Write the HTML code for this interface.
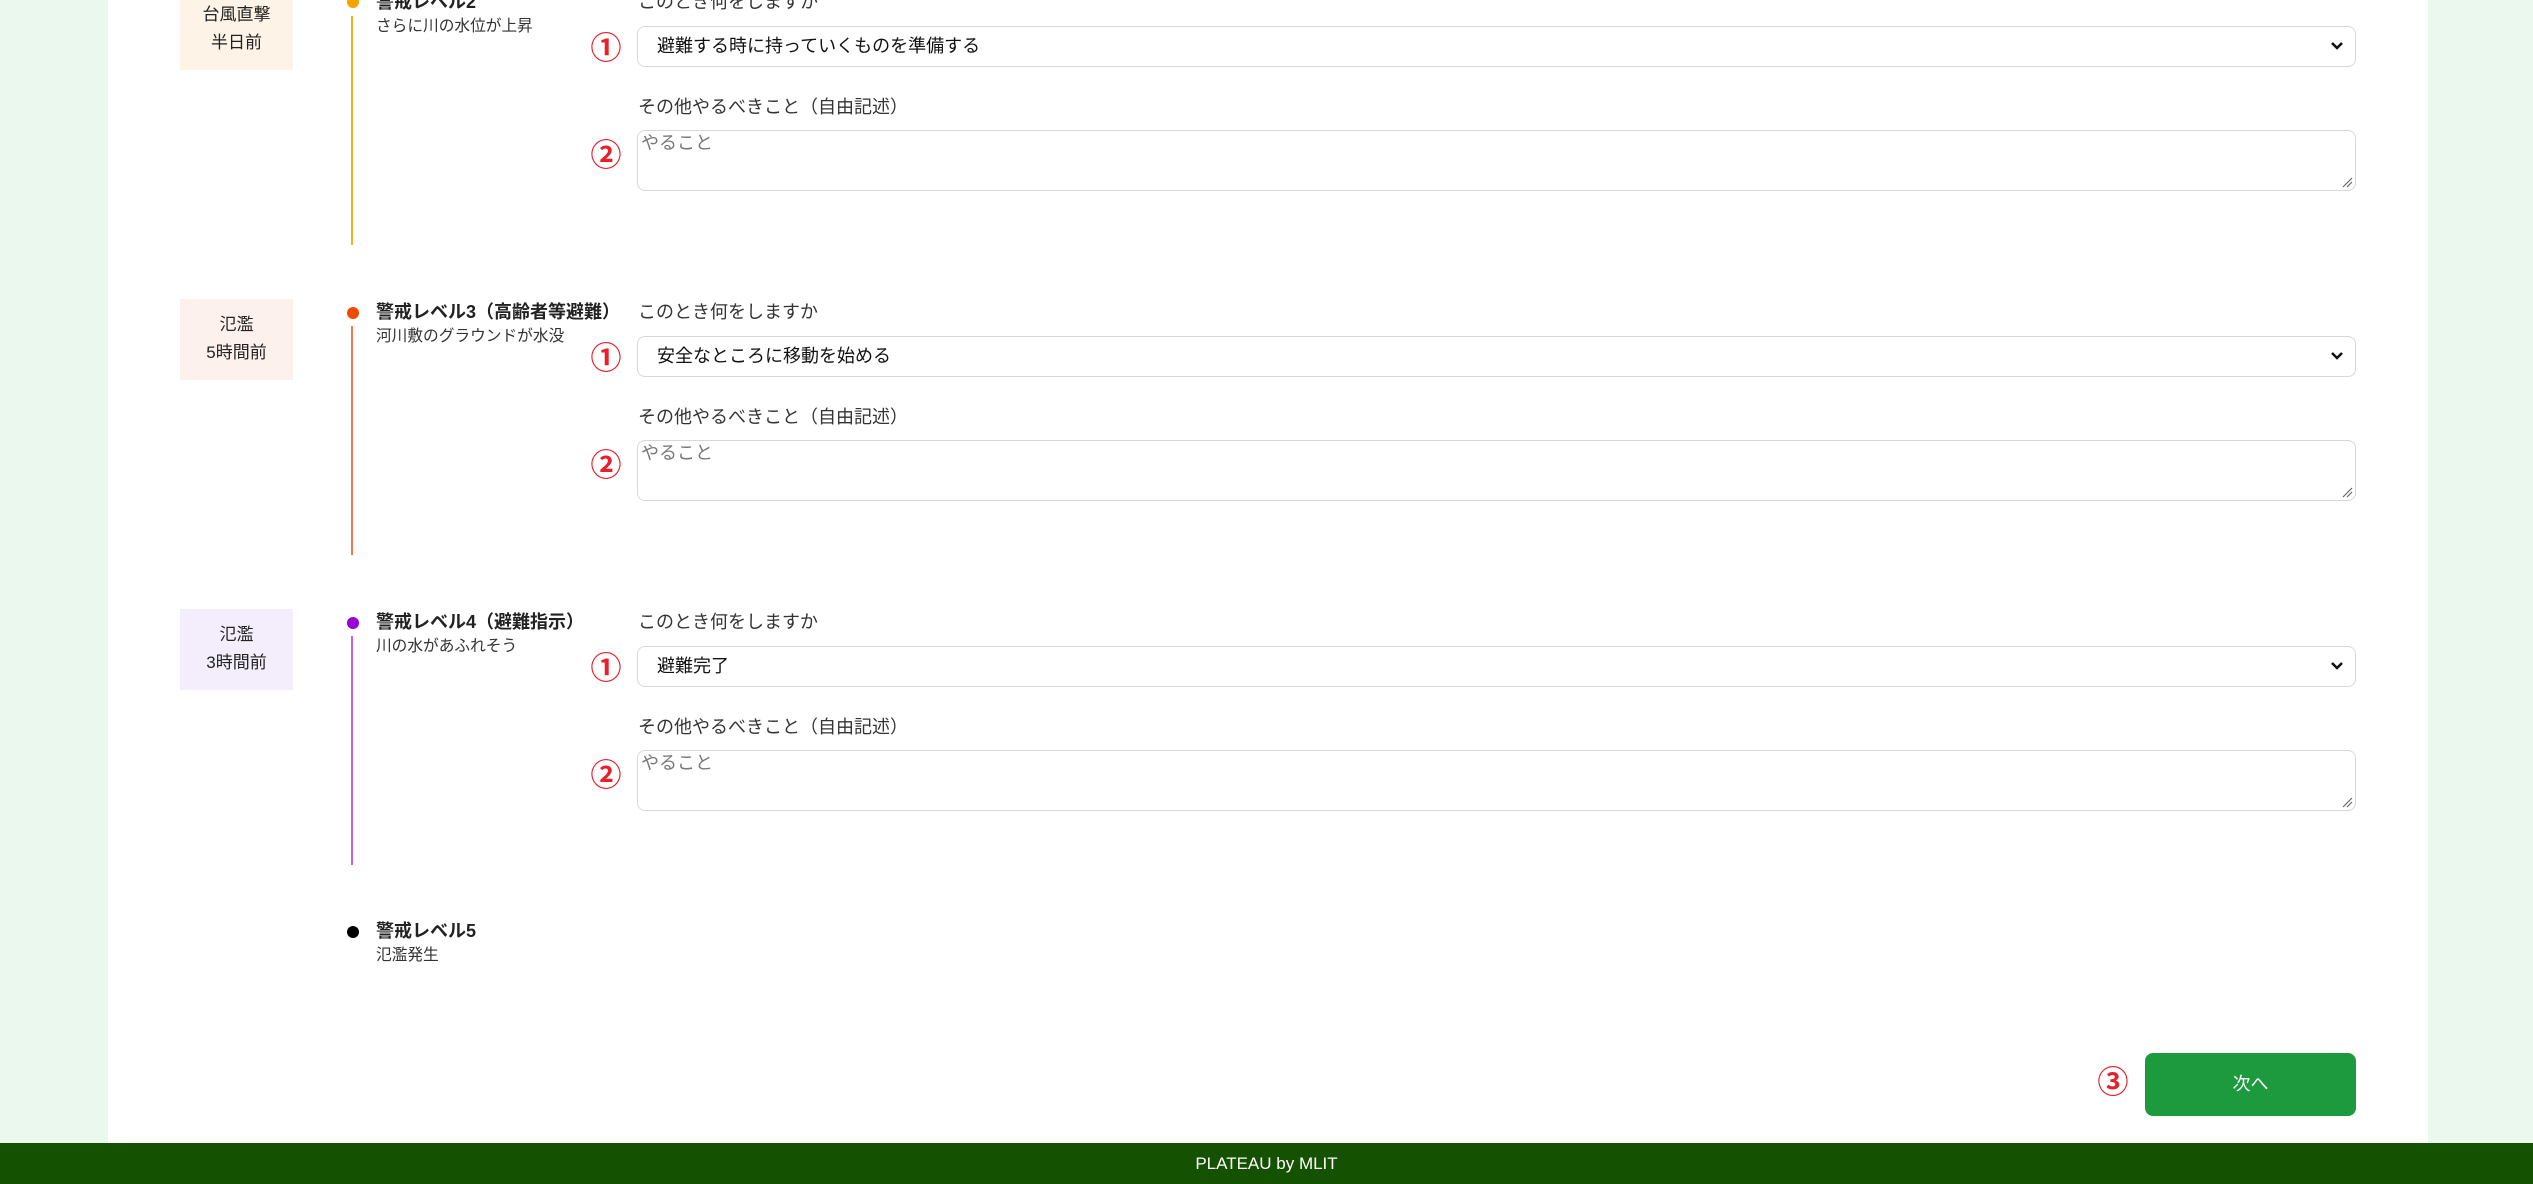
<!DOCTYPE html>
<html><head><meta charset="utf-8"><style>
*{margin:0;padding:0;box-sizing:border-box}
body{width:2533px;height:1184px;background:#ebf8ee;position:relative;overflow:hidden;font-family:"Liberation Sans","Noto Sans CJK JP",sans-serif;color:#222}
.wrap{position:absolute;left:108px;top:0;width:2320px;height:1143px;background:#fff}
.a{position:absolute;white-space:nowrap}
.box{position:absolute;left:180px;width:113px;height:81px;text-align:center;font-size:17px;line-height:28px;padding-top:12px;color:#222}
.dot{position:absolute;left:347px;width:12px;height:12px;border-radius:50%}
.line{position:absolute;left:351px;width:2px}
.t{position:absolute;left:376px;font-size:18px;font-weight:bold;line-height:20px;color:#222}
.s{position:absolute;left:376px;font-size:15.7px;line-height:20px;color:#333}
.lb{position:absolute;left:638px;font-size:18px;line-height:22px;color:#333}
.sel{position:absolute;left:637px;width:1719px;height:41px;border:1.5px solid #d8d8d8;border-radius:8px;font-size:18px;line-height:38px;padding-left:19px;color:#111}
.sel svg{position:absolute;right:10px;top:13px}
.ta{position:absolute;left:637px;width:1719px;height:61px;border:1.5px solid #d8d8d8;border-radius:8px;font-size:18px;line-height:24px;padding-left:3px;color:#777}
.ta svg{position:absolute;right:2px;bottom:2px}
.n{position:absolute;left:590px;width:32px;text-align:center;font-size:31px;line-height:34px;color:#e8202a;font-weight:bold}
</style></head><body>
<div class="wrap"></div>

<div class="box" style="top:-11px;background:#fdf3e6"><div>台風直撃</div><div>半日前</div></div>
<div class="dot" style="top:-4px;background:#f5a300"></div>
<div class="line" style="top:16px;height:229px;background:#f5b020"></div>
<div class="t" style="top:-8px">警戒レベル2</div>
<div class="s" style="top:17px">さらに川の水位が上昇</div>
<div class="lb" style="top:-9px">このとき何をしますか</div>
<div class="n" style="top:32px">①</div>
<div class="sel" style="top:26px">避難する時に持っていくものを準備する<svg width="16" height="12" viewBox="0 0 16 12"><path d="M3 3l5 5 5-5" stroke="#111" stroke-width="2.5" fill="none"/></svg></div>
<div class="lb" style="top:96px">その他やるべきこと（自由記述）</div>
<div class="n" style="top:139px">②</div>
<div class="ta" style="top:130px">やること<svg width="12" height="12" viewBox="0 0 12 12"><path d="M2 11L11 2M6 11L11 6" stroke="#666" stroke-width="1.2"/></svg></div>

<div class="box" style="top:299px;background:#fdf1ee"><div>氾濫</div><div>5時間前</div></div>
<div class="dot" style="top:307px;background:#f04a00"></div>
<div class="line" style="top:326px;height:229px;background:#f07a50"></div>
<div class="t" style="top:302px">警戒レベル3（高齢者等避難）</div>
<div class="s" style="top:327px">河川敷のグラウンドが水没</div>
<div class="lb" style="top:301px">このとき何をしますか</div>
<div class="n" style="top:342px">①</div>
<div class="sel" style="top:336px">安全なところに移動を始める<svg width="16" height="12" viewBox="0 0 16 12"><path d="M3 3l5 5 5-5" stroke="#111" stroke-width="2.5" fill="none"/></svg></div>
<div class="lb" style="top:406px">その他やるべきこと（自由記述）</div>
<div class="n" style="top:449px">②</div>
<div class="ta" style="top:440px">やること<svg width="12" height="12" viewBox="0 0 12 12"><path d="M2 11L11 2M6 11L11 6" stroke="#666" stroke-width="1.2"/></svg></div>

<div class="box" style="top:609px;background:#f4eefc"><div>氾濫</div><div>3時間前</div></div>
<div class="dot" style="top:617px;background:#9a00d8"></div>
<div class="line" style="top:636px;height:229px;background:#c060ec"></div>
<div class="t" style="top:612px">警戒レベル4（避難指示）</div>
<div class="s" style="top:637px">川の水があふれそう</div>
<div class="lb" style="top:611px">このとき何をしますか</div>
<div class="n" style="top:652px">①</div>
<div class="sel" style="top:646px">避難完了<svg width="16" height="12" viewBox="0 0 16 12"><path d="M3 3l5 5 5-5" stroke="#111" stroke-width="2.5" fill="none"/></svg></div>
<div class="lb" style="top:716px">その他やるべきこと（自由記述）</div>
<div class="n" style="top:759px">②</div>
<div class="ta" style="top:750px">やること<svg width="12" height="12" viewBox="0 0 12 12"><path d="M2 11L11 2M6 11L11 6" stroke="#666" stroke-width="1.2"/></svg></div>

<div class="dot" style="top:926px;background:#000"></div>
<div class="t" style="top:921px">警戒レベル5</div>
<div class="s" style="top:946px">氾濫発生</div>

<div class="n" style="left:2097px;top:1066px">③</div>
<div class="a" style="left:2145px;top:1053px;width:211px;height:63px;background:#1e9a3e;border-radius:8px;color:#fff;font-size:18px;line-height:63px;text-align:center">次へ</div>

<div class="a" style="left:0;top:1143px;width:2533px;height:41px;background:#145100;color:#fff;font-size:17px;line-height:41px;text-align:center">PLATEAU by MLIT</div>
</body></html>
